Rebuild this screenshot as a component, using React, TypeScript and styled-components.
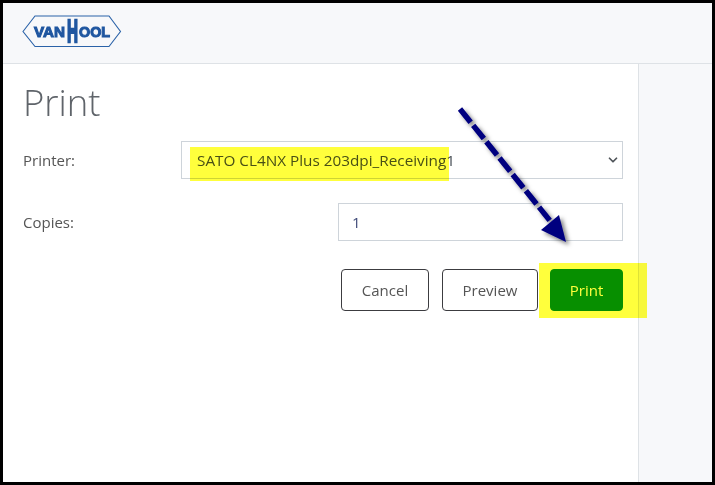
import React from 'react';
import styled, { createGlobalStyle } from 'styled-components';
import { ChevronDown } from 'lucide-react';

const GlobalStyle = createGlobalStyle`
  html, body {
    margin: 0;
    padding: 0;
    background: #fff;
  }
  body {
    font-family: "Open Sans", "Liberation Sans", sans-serif;
  }
`;

const Frame = styled.div`
  position: relative;
  box-sizing: border-box;
  width: 715px;
  height: 485px;
  border: 3px solid #000;
  display: flex;
  flex-direction: column;
  overflow: hidden;
  background: #fff;
`;

const Header = styled.header`
  box-sizing: border-box;
  height: 61px;
  flex: none;
  display: flex;
  align-items: center;
  padding: 0 0 4px 19px;
  background: #f7f8fa;
  border-bottom: 1px solid #dee2e6;
`;

const Body = styled.div`
  flex: 1;
  display: flex;
  min-height: 0;
`;

const Main = styled.main`
  flex: 1;
  box-sizing: border-box;
  padding: 15px 15px 0 20px;
  display: flex;
  flex-direction: column;
`;

const Sidebar = styled.aside`
  width: 74px;
  flex: none;
  box-sizing: border-box;
  background: #f7f8fa;
  border-left: 1px solid #dee2e6;
`;

const Title = styled.h1`
  margin: 0 0 16px;
  font-size: 36.5px;
  line-height: 46px;
  font-weight: 300;
  color: #5f646a;
`;

const Row = styled.div<{ $gap?: number }>`
  display: flex;
  align-items: center;
  justify-content: space-between;
  height: 38px;
  margin-bottom: ${(p) => p.$gap ?? 24}px;
`;

const Label = styled.label`
  font-size: 15px;
  color: #555;
`;

const SelectWrap = styled.div`
  position: relative;
  width: 442px;
  height: 38px;

  svg {
    position: absolute;
    right: 3px;
    top: 12px;
    color: #50555a;
    pointer-events: none;
  }
`;

const Select = styled.select`
  box-sizing: border-box;
  width: 100%;
  height: 100%;
  padding: 0 24px 0 15px;
  appearance: none;
  background: #fff;
  border: 1px solid #ced4da;
  border-radius: 0;
  font-family: inherit;
  font-size: 15.3px;
  color: #495057;
  outline: none;
`;

const Input = styled.input`
  box-sizing: border-box;
  width: 285px;
  height: 38px;
  padding: 0 13px;
  background: #fff;
  border: 1px solid #ced4da;
  font-family: inherit;
  font-size: 15px;
  color: #3f4a78;
  outline: none;
`;

const Actions = styled.div`
  display: flex;
  justify-content: flex-end;
  gap: 12px;
`;

const Button = styled.button<{ $primary?: boolean; $width: number }>`
  box-sizing: border-box;
  width: ${(p) => p.$width}px;
  height: 42px;
  padding: 0;
  border-radius: 4px;
  border: 1px solid ${(p) => (p.$primary ? '#078f00' : '#3c3c40')};
  background: ${(p) => (p.$primary ? '#078f00' : '#fff')};
  color: ${(p) => (p.$primary ? '#fff' : '#555')};
  font-family: inherit;
  font-size: 15px;
`;

const CancelButton = styled(Button)`
  margin-right: 1px;
`;

const Highlight = styled.div<{ $left: number; $top: number; $width: number; $height: number }>`
  position: absolute;
  left: ${(p) => p.$left}px;
  top: ${(p) => p.$top}px;
  width: ${(p) => p.$width}px;
  height: ${(p) => p.$height}px;
  background: #ffff3c;
  mix-blend-mode: multiply;
  pointer-events: none;
`;

const ArrowLayer = styled.svg`
  position: absolute;
  left: -3px;
  top: -3px;
  pointer-events: none;
`;

const LogoText = styled.text`
  font-family: "Liberation Sans", Arial, sans-serif;
  font-weight: 700;
  fill: #1f56a0;
  stroke: #1f56a0;
  stroke-width: 1px;
`;

const Logo = () => (
  <svg width="100" height="47" viewBox="0 -7 100 47">
    <polygon
      points="1,16.5 13,1 87,1 98.5,16.5 87,31.5 13,31.5"
      fill="none"
      stroke="#2a62a8"
      strokeWidth="1.1"
    />
    <LogoText x="12" y="22" fontSize="14" textLength="31" lengthAdjust="spacingAndGlyphs">
      VAN
    </LogoText>
    <LogoText
      x="0"
      y="0"
      fontSize="14"
      textLength="11"
      lengthAdjust="spacingAndGlyphs"
      transform="translate(45 27) scale(1 2.3)"
    >
      H
    </LogoText>
    <LogoText x="57" y="22" fontSize="14" textLength="31" lengthAdjust="spacingAndGlyphs">
      OOL
    </LogoText>
  </svg>
);

const Arrow = () => (
  <ArrowLayer width="715" height="485" viewBox="0 0 715 485">
    <defs>
      <filter id="arrowShadow" x="-30%" y="-30%" width="160%" height="160%">
        <feDropShadow dx="3" dy="3" stdDeviation="2.2" floodColor="#000" floodOpacity="0.5" />
      </filter>
    </defs>
    <g filter="url(#arrowShadow)">
      <line
        x1="460"
        y1="109"
        x2="551"
        y2="222"
        stroke="#00007f"
        strokeWidth="5.5"
        strokeDasharray="17 4"
      />
      <polygon points="566,242 541,230 559,215" fill="#00007f" />
    </g>
  </ArrowLayer>
);

export default function App() {
  return (
    <>
      <GlobalStyle />
      <Frame>
        <Header>
          <Logo />
        </Header>
        <Body>
          <Main>
            <Title>Print</Title>
            <Row>
              <Label htmlFor="printer">Printer:</Label>
              <SelectWrap>
                <Select id="printer" defaultValue="SATO CL4NX Plus 203dpi_Receiving1">
                  <option>SATO CL4NX Plus 203dpi_Receiving1</option>
                </Select>
                <ChevronDown size={14} strokeWidth={3} />
              </SelectWrap>
            </Row>
            <Row $gap={28}>
              <Label htmlFor="copies">Copies:</Label>
              <Input id="copies" defaultValue="1" />
            </Row>
            <Actions>
              <CancelButton $width={88}>Cancel</CancelButton>
              <Button $width={96}>Preview</Button>
              <Button $primary $width={73}>Print</Button>
            </Actions>
          </Main>
          <Sidebar />
        </Body>
        <Highlight $left={187} $top={144} $width={259} $height={34} />
        <Highlight $left={536} $top={260} $width={108} $height={55} />
        <Arrow />
      </Frame>
    </>
  );
}
